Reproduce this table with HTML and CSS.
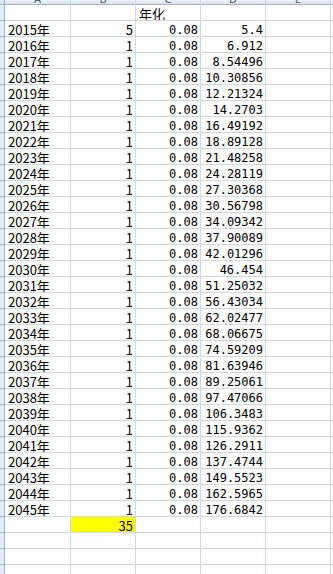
FILE: index.html
```html
<!DOCTYPE html>
<html lang="zh">
<head>
<meta charset="utf-8">
<link rel="stylesheet" href="styles.css">
</head>
<body>
<div class="sheet">
<div class="corner"></div><div class="hd"><span>A</span></div><div class="hd"><span>B</span></div><div class="hd"><span>C</span></div><div class="hd"><span>D</span></div><div class="hd"><span>E</span></div><div class="hd"><span>F</span></div>
<div class="rh"></div><div class="c"></div><div class="c"></div><div class="c t">年化</div><div class="c"></div><div class="c"></div><div class="c"></div>
<div class="rh"></div><div class="c t">2015年</div><div class="c n">5</div><div class="c m">0.08</div><div class="c m">5.4</div><div class="c"></div><div class="c"></div>
<div class="rh"></div><div class="c t">2016年</div><div class="c n">1</div><div class="c m">0.08</div><div class="c m">6.912</div><div class="c"></div><div class="c"></div>
<div class="rh"></div><div class="c t">2017年</div><div class="c n">1</div><div class="c m">0.08</div><div class="c m">8.54496</div><div class="c"></div><div class="c"></div>
<div class="rh"></div><div class="c t">2018年</div><div class="c n">1</div><div class="c m">0.08</div><div class="c m">10.30856</div><div class="c"></div><div class="c"></div>
<div class="rh"></div><div class="c t">2019年</div><div class="c n">1</div><div class="c m">0.08</div><div class="c m">12.21324</div><div class="c"></div><div class="c"></div>
<div class="rh"></div><div class="c t">2020年</div><div class="c n">1</div><div class="c m">0.08</div><div class="c m">14.2703</div><div class="c"></div><div class="c"></div>
<div class="rh"></div><div class="c t">2021年</div><div class="c n">1</div><div class="c m">0.08</div><div class="c m">16.49192</div><div class="c"></div><div class="c"></div>
<div class="rh"></div><div class="c t">2022年</div><div class="c n">1</div><div class="c m">0.08</div><div class="c m">18.89128</div><div class="c"></div><div class="c"></div>
<div class="rh"></div><div class="c t">2023年</div><div class="c n">1</div><div class="c m">0.08</div><div class="c m">21.48258</div><div class="c"></div><div class="c"></div>
<div class="rh"></div><div class="c t">2024年</div><div class="c n">1</div><div class="c m">0.08</div><div class="c m">24.28119</div><div class="c"></div><div class="c"></div>
<div class="rh"></div><div class="c t">2025年</div><div class="c n">1</div><div class="c m">0.08</div><div class="c m">27.30368</div><div class="c"></div><div class="c"></div>
<div class="rh"></div><div class="c t">2026年</div><div class="c n">1</div><div class="c m">0.08</div><div class="c m">30.56798</div><div class="c"></div><div class="c"></div>
<div class="rh"></div><div class="c t">2027年</div><div class="c n">1</div><div class="c m">0.08</div><div class="c m">34.09342</div><div class="c"></div><div class="c"></div>
<div class="rh"></div><div class="c t">2028年</div><div class="c n">1</div><div class="c m">0.08</div><div class="c m">37.90089</div><div class="c"></div><div class="c"></div>
<div class="rh"></div><div class="c t">2029年</div><div class="c n">1</div><div class="c m">0.08</div><div class="c m">42.01296</div><div class="c"></div><div class="c"></div>
<div class="rh"></div><div class="c t">2030年</div><div class="c n">1</div><div class="c m">0.08</div><div class="c m">46.454</div><div class="c"></div><div class="c"></div>
<div class="rh"></div><div class="c t">2031年</div><div class="c n">1</div><div class="c m">0.08</div><div class="c m">51.25032</div><div class="c"></div><div class="c"></div>
<div class="rh"></div><div class="c t">2032年</div><div class="c n">1</div><div class="c m">0.08</div><div class="c m">56.43034</div><div class="c"></div><div class="c"></div>
<div class="rh"></div><div class="c t">2033年</div><div class="c n">1</div><div class="c m">0.08</div><div class="c m">62.02477</div><div class="c"></div><div class="c"></div>
<div class="rh"></div><div class="c t">2034年</div><div class="c n">1</div><div class="c m">0.08</div><div class="c m">68.06675</div><div class="c"></div><div class="c"></div>
<div class="rh"></div><div class="c t">2035年</div><div class="c n">1</div><div class="c m">0.08</div><div class="c m">74.59209</div><div class="c"></div><div class="c"></div>
<div class="rh"></div><div class="c t">2036年</div><div class="c n">1</div><div class="c m">0.08</div><div class="c m">81.63946</div><div class="c"></div><div class="c"></div>
<div class="rh"></div><div class="c t">2037年</div><div class="c n">1</div><div class="c m">0.08</div><div class="c m">89.25061</div><div class="c"></div><div class="c"></div>
<div class="rh"></div><div class="c t">2038年</div><div class="c n">1</div><div class="c m">0.08</div><div class="c m">97.47066</div><div class="c"></div><div class="c"></div>
<div class="rh"></div><div class="c t">2039年</div><div class="c n">1</div><div class="c m">0.08</div><div class="c m">106.3483</div><div class="c"></div><div class="c"></div>
<div class="rh"></div><div class="c t">2040年</div><div class="c n">1</div><div class="c m">0.08</div><div class="c m">115.9362</div><div class="c"></div><div class="c"></div>
<div class="rh"></div><div class="c t">2041年</div><div class="c n">1</div><div class="c m">0.08</div><div class="c m">126.2911</div><div class="c"></div><div class="c"></div>
<div class="rh"></div><div class="c t">2042年</div><div class="c n">1</div><div class="c m">0.08</div><div class="c m">137.4744</div><div class="c"></div><div class="c"></div>
<div class="rh"></div><div class="c t">2043年</div><div class="c n">1</div><div class="c m">0.08</div><div class="c m">149.5523</div><div class="c"></div><div class="c"></div>
<div class="rh"></div><div class="c t">2044年</div><div class="c n">1</div><div class="c m">0.08</div><div class="c m">162.5965</div><div class="c"></div><div class="c"></div>
<div class="rh"></div><div class="c t">2045年</div><div class="c n">1</div><div class="c m">0.08</div><div class="c m">176.6842</div><div class="c"></div><div class="c"></div>
<div class="rh"></div><div class="c"></div><div class="c n y">35</div><div class="c"></div><div class="c"></div><div class="c"></div><div class="c"></div>
<div class="rh"></div><div class="c"></div><div class="c"></div><div class="c"></div><div class="c"></div><div class="c"></div><div class="c"></div>
<div class="rh"></div><div class="c"></div><div class="c"></div><div class="c"></div><div class="c"></div><div class="c"></div><div class="c"></div>
<div class="rh"></div><div class="c"></div><div class="c"></div><div class="c"></div><div class="c"></div><div class="c"></div><div class="c"></div>
</div>
</body>
</html>
```
FILE: styles.css
```css
html, body {
  margin: 0;
  padding: 0;
  background: #ffffff;
  overflow: hidden;
}

.sheet {
  display: grid;
  grid-template-columns: 4px 65px 64px 64px 64px 64px 10px;
  grid-template-rows: 4px;
  grid-auto-rows: 15px;
  gap: 1px;
  background: #d0d7e5;
  width: 340px;
  color: #000000;
}

.corner {
  background: #dde6f1;
  box-shadow: 1px 0 0 #9eb6ce, 0 1px 0 #9eb6ce, 1px 1px 0 #9eb6ce;
}

.hd {
  background: linear-gradient(#eef3f9, #d9e2ee);
  box-shadow: 0 1px 0 #9eb6ce;
  overflow: hidden;
  display: flex;
  align-items: flex-end;
  justify-content: center;
  font-family: "Noto Sans", "DejaVu Sans", sans-serif;
  font-size: 11px;
  color: #4d5a6b;
}

.hd span {
  line-height: 11px;
  height: 11px;
  flex: none;
}

.rh {
  background: #e4ecf7;
  box-shadow: 1px 0 0 #9eb6ce, 0 1px 0 #9eb6ce, 1px 1px 0 #9eb6ce;
}

.c {
  background: #ffffff;
  overflow: hidden;
  white-space: nowrap;
  box-sizing: border-box;
}

.t {
  font-family: "Noto Sans CJK SC", "Noto Sans", sans-serif;
  font-size: 13px;
  line-height: 13px;
  padding-left: 3px;
  padding-top: 2px;
}

.n {
  font-family: "Noto Sans CJK SC", "Noto Sans", sans-serif;
  font-size: 13px;
  line-height: 13px;
  text-align: right;
  padding-right: 2px;
  padding-top: 2px;
}

.m {
  font-family: "DejaVu Sans Mono", "Liberation Mono", monospace;
  font-size: 12px;
  line-height: 11px;
  text-align: right;
  padding-right: 2px;
  padding-top: 4px;
}

.y {
  background: #ffff00;
}
```
